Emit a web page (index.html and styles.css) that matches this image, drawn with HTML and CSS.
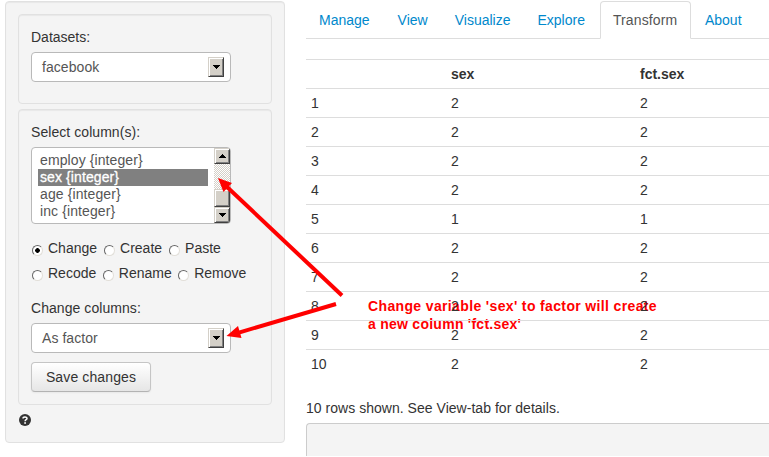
FILE: index.html
```html
<!DOCTYPE html>
<html lang="en">
<head>
<meta charset="utf-8">
<title>Transform</title>
<link rel="stylesheet" href="styles.css">
</head>
<body>
<div class="page">
  <aside class="well sidebar">
    <section class="well panel datasets">
      <label class="label">Datasets:</label>
      <div class="select"><span>facebook</span><i class="btn3d drop"><svg width="7" height="4" shape-rendering="crispEdges"><path d="M0 0h7v1h-1v1h-1v1h-1v1h-1v-1h-1v-1h-1v-1h-1z"/></svg></i></div>
    </section>
    <section class="well panel columns">
      <label class="label wide">Select column(s):</label>
      <div class="listbox">
        <ul class="options">
          <li>employ {integer}</li>
          <li class="selected">sex {integer}</li>
          <li>age {integer}</li>
          <li>inc {integer}</li>
        </ul>
        <div class="scrollbar">
          <i class="btn3d arrow"><svg width="7" height="4" shape-rendering="crispEdges"><path d="M3 0h1v1h1v1h1v1h1v1h-7v-1h1v-1h1v-1h1z"/></svg></i>
          <i class="track"></i>
          <i class="btn3d thumb"></i>
          <i class="btn3d arrow"><svg width="7" height="4" shape-rendering="crispEdges"><path d="M0 0h7v1h-1v1h-1v1h-1v1h-1v-1h-1v-1h-1v-1h-1z"/></svg></i>
        </div>
      </div>
      <div class="radios">
        <div class="radio-row first"><i class="radio checked"></i><span>Change</span><i class="radio"></i><span>Create</span><i class="radio"></i><span>Paste</span></div>
        <div class="radio-row second"><i class="radio"></i><span>Recode</span><i class="radio"></i><span>Rename</span><i class="radio"></i><span>Remove</span></div>
      </div>
      <label class="label wide">Change columns:</label>
      <div class="select"><span>As factor</span><i class="btn3d drop"><svg width="7" height="4" shape-rendering="crispEdges"><path d="M0 0h7v1h-1v1h-1v1h-1v1h-1v-1h-1v-1h-1v-1h-1z"/></svg></i></div>
      <button class="save">Save changes</button>
    </section>
    <svg class="help" width="12" height="12" viewBox="0 0 12 12"><circle cx="6" cy="6" r="6" fill="#333"/><path d="M4 4.6C4 2.4 8 2.4 8 4.5C8 5.8 6.1 5.7 6.1 7.2M5.2 8.9H7" fill="none" stroke="#fff" stroke-width="1.5"/></svg>
  </aside>
  <main class="main">
    <nav class="tabs">
      <a>Manage</a><a>View</a><a class="visualize">Visualize</a><a>Explore</a><a class="active">Transform</a><a>About</a>
    </nav>
    <table class="data">
      <thead><tr><th class="idx"></th><th class="c1">sex</th><th>fct.sex</th></tr></thead>
      <tbody>
        <tr><td>1</td><td>2</td><td>2</td></tr>
        <tr><td>2</td><td>2</td><td>2</td></tr>
        <tr><td>3</td><td>2</td><td>2</td></tr>
        <tr><td>4</td><td>2</td><td>2</td></tr>
        <tr><td>5</td><td>1</td><td>1</td></tr>
        <tr><td>6</td><td>2</td><td>2</td></tr>
        <tr><td>7</td><td>2</td><td>2</td></tr>
        <tr><td>8</td><td>2</td><td>2</td></tr>
        <tr><td>9</td><td>2</td><td>2</td></tr>
        <tr><td>10</td><td>2</td><td>2</td></tr>
      </tbody>
    </table>
    <p class="note">10 rows shown. See View-tab for details.</p>
    <pre class="output"></pre>
  </main>
</div>
<div class="callout"><span class="line1">Change variable 'sex' to factor will create</span><br>a new column 'fct.sex'</div>
<svg class="arrows" width="769" height="457">
  <g stroke="#f00" stroke-width="4"><path d="M342 295.500L226 186"/><path d="M336 304L238 332.800"/></g>
  <g fill="#f00"><path d="M218 178L232 183L223.500 192Z"/><path d="M226.500 336L238 326L241.500 338Z"/></g>
</svg>
</body>
</html>
```
FILE: styles.css
```css
* { box-sizing: border-box; }
body {
  margin: 0;
  width: 769px;
  height: 457px;
  overflow: hidden;
  position: relative;
  background: #fff;
  color: #333;
  font: 14px/20px "Liberation Sans", Arial, sans-serif;
}
.page { display: flex; align-items: flex-start; padding: 1px 0 0 5px; height: 457px; }
.well {
  background: #f4f4f4;
  border: 1px solid #e1e1e1;
  border-radius: 4px;
  box-shadow: inset 0 1px 1px rgba(0, 0, 0, .05);
}
.sidebar { width: 280px; height: 442px; padding: 12px; flex: none; }
.panel { padding: 12px; }
.datasets { height: 90px; margin-bottom: 5px; }
.columns { height: 296px; }
.label { display: block; height: 25px; }
.wide { letter-spacing: .06px; }
.select {
  width: 200px;
  height: 30px;
  border: 1px solid #b9b9b9;
  border-radius: 4px;
  background: #fff;
  color: #555;
  display: flex;
  align-items: center;
  justify-content: space-between;
  padding: 0 6px 0 10px;
  letter-spacing: .06px;
}
.btn3d {
  display: flex;
  align-items: center;
  justify-content: center;
  background: #d4d0c8;
  border: 1px solid;
  border-color: #d4d0c8 #404040 #404040 #d4d0c8;
  box-shadow: inset 1px 1px #fff, inset -1px -1px #808080;
}
.drop { width: 16px; height: 20px; }
.listbox {
  width: 200px;
  height: 77px;
  border: 1px solid #b9b9b9;
  border-radius: 4px;
  background: #fff;
  color: #555;
  display: flex;
  justify-content: space-between;
  overflow: hidden;
}
.options { list-style: none; margin: 0; padding: 4px 0 0 6px; width: 176px; line-height: 17px; letter-spacing: .1px; }
.options li { height: 17px; padding-left: 2px; }
.options .selected { background: #808080; color: #fff; -webkit-text-stroke: .3px #fff; }
.scrollbar { width: 16px; display: flex; flex-direction: column; }
.arrow { height: 16px; }
.track { flex: 1; background: repeating-conic-gradient(#d4d0c8 0 25%, #fff 0 50%) 0 0 / 2px 2px; }
.thumb { height: 18px; }
.radios { padding-top: 14px; height: 74px; }
.radio-row { display: flex; height: 25px; align-items: flex-start; }
.radio {
  width: 11px;
  height: 11px;
  margin: 7px 5px 0 1px;
  border-radius: 50%;
  background: #fff;
  border: 1px solid;
  border-color: #666 #e2dfd9 #e2dfd9 #666;
}
.checked { background: radial-gradient(circle, #000 2px, #fff 2.600px); }
.radio-row span { margin-right: 6px; }
.second span { margin-right: 5.500px; }
.save {
  display: block;
  width: 120px;
  height: 30px;
  margin-top: 9px;
  padding: 0;
  font: inherit;
  letter-spacing: .12px;
  color: #333;
  border: 1px solid #c5c5c5;
  border-bottom-color: #b3b3b3;
  border-radius: 4px;
  background: linear-gradient(#fff, #e6e6e6);
  box-shadow: 0 1px 2px rgba(0, 0, 0, .05);
}
.help { display: block; margin: 9px 0 0 1px; }
.main { margin-left: 21px; flex: 1; min-width: 0; height: 456px; overflow: hidden; position: relative; z-index: 1; }
.tabs { display: flex; height: 38px; border-bottom: 1px solid #ddd; }
.tabs a {
  height: 38px;
  margin-right: 2px;
  padding: 8px 12px;
  border: 1px solid transparent;
  border-radius: 4px 4px 0 0;
  color: #08c;
}
.tabs .visualize { margin: 0 1px 0 -1px; }
.tabs .active { width: 91px; color: #555; background: #fff; border-color: #ddd #ddd #fff; letter-spacing: .12px; margin-right: 1px; }
.data { width: 463px; margin-top: 20px; border-collapse: separate; border-spacing: 0; table-layout: fixed; }
.data th, .data td { height: 29px; padding: 4px 5px; border-top: 1px solid #ddd; text-align: left; }
.idx { width: 140px; }
.c1 { width: 189px; }
.note { margin: 20px 0 5px; letter-spacing: .03px; }
.output { margin: 0; height: 33px; background: #f4f4f4; border: 1px solid #ccc; border-width: 1px 0 0 1px; border-radius: 4px 0 0 0; }
.callout {
  position: absolute;
  left: 368px;
  top: 297px;
  color: #f00;
  font-weight: bold;
  line-height: 18px;
  white-space: nowrap;
  letter-spacing: .26px;
}
.line1 { letter-spacing: .36px; }
.arrows { position: absolute; left: 0; top: 0; z-index: 2; }
```
